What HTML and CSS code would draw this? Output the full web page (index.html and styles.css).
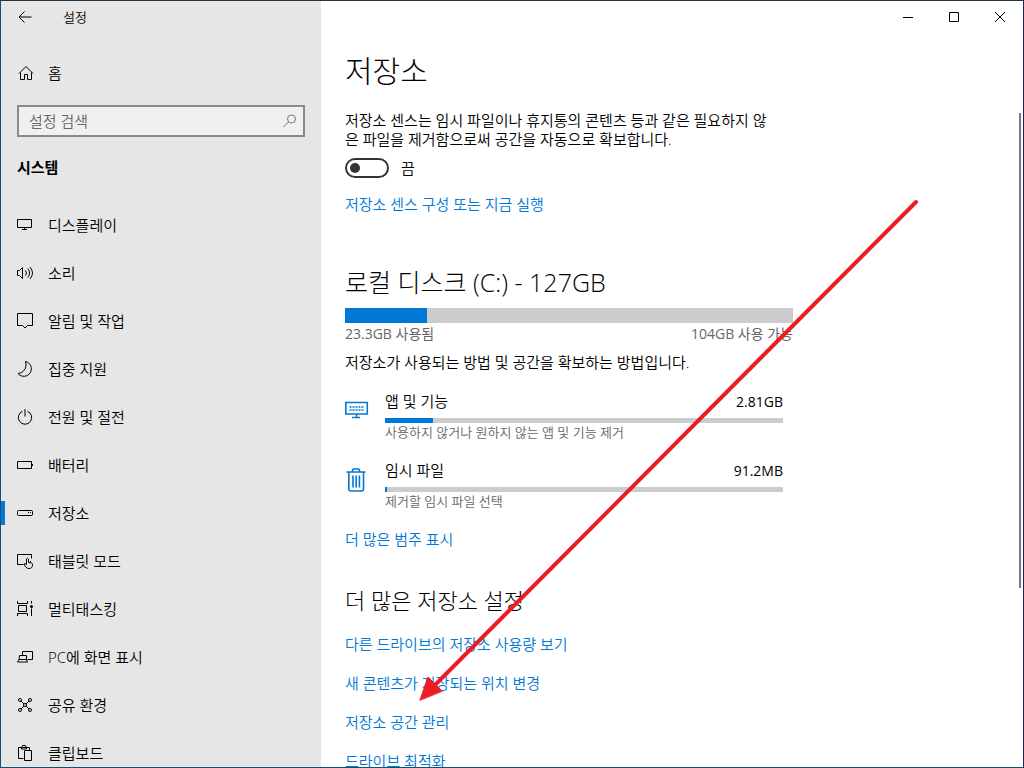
FILE: index.html
```html
<!DOCTYPE html>
<html lang="ko">
<head>
    <meta charset="UTF-8">
    <meta name="viewport" content="width=device-width, initial-scale=1.0">
    <title>설정 - 저장소</title>
    <link rel="stylesheet" href="styles.css">
</head>
<body>
    <div class="window">
        <aside class="sidebar">
            <div class="titlebar">
                <button class="back" aria-label="뒤로">
                    <svg width="18" height="18" viewBox="0 0 18 18"><path d="M8.500 3.500L3 9l5.500 5.500M3 9h12.500"/></svg>
                </button>
                <span>설정</span>
            </div>

            <a class="nav-item home" href="#">
                <svg width="18" height="18" viewBox="0 0 18 18"><path d="M2 9.500L9 2.500l7 7M3.500 8.500v7h4v-5h3v5h4v-7"/></svg>
                홈
            </a>

            <form class="search">
                <input type="text" placeholder="설정 검색" aria-label="설정 검색">
                <svg width="16" height="16" viewBox="0 0 16 16"><circle cx="10.500" cy="6" r="4"/><path d="M7.500 9L2.500 14"/></svg>
            </form>

            <h2 class="group">시스템</h2>

            <nav>
                <a class="nav-item" href="#">
                    <svg width="18" height="18" viewBox="0 0 18 18"><path d="M.5 3.500h14v8h-14zM7.500 12v1M5 13.500h5"/></svg>
                    디스플레이
                </a>
                <a class="nav-item" href="#">
                    <svg width="18" height="18" viewBox="0 0 18 18"><path d="M.5 6.500h2l3-3v11l-3-3h-2zM8.500 6.500q2 2.500 0 5M10.800 4.500q3.600 4.500 0 9M13 3q5 6 0 12"/></svg>
                    소리
                </a>
                <a class="nav-item" href="#">
                    <svg width="18" height="18" viewBox="0 0 18 18"><path d="M.5 1.500h15v12h-5L8 16l-2.500-2.500h-5z"/></svg>
                    알림 및 작업
                </a>
                <a class="nav-item" href="#">
                    <svg width="18" height="18" viewBox="0 0 18 18"><path d="M8.500 1.500A7.500 7.500 0 1 1 1 13.500C6.500 13 10.500 8 8.500 1.500z"/></svg>
                    집중 지원
                </a>
                <a class="nav-item" href="#">
                    <svg width="18" height="18" viewBox="0 0 18 18"><path d="M5.500 3.300A6.700 6.700 0 1 0 10.500 3.300M8 1v7.500"/></svg>
                    전원 및 절전
                </a>
                <a class="nav-item" href="#">
                    <svg width="18" height="18" viewBox="0 0 18 18"><path d="M.5 5.500h14v7h-14zM15.500 8v2"/></svg>
                    배터리
                </a>
                <a class="nav-item active" href="#" aria-current="page">
                    <svg width="18" height="18" viewBox="0 0 18 18"><rect x=".5" y="6.500" width="15" height="5" rx="1"/><path d="M11 8.500h1M13 8.500h1"/></svg>
                    저장소
                </a>
                <a class="nav-item" href="#">
                    <svg width="18" height="18" viewBox="0 0 18 18"><path d="M6.500 12.500h-6v-10h14v4M9.500 12.500V7q1-1.800 2 0v3.500l3 .5q1.200.3 1 1.800c0 2.500-1.200 3.700-3.500 3.700-2.300 0-3.800-1.500-4.800-4.500q.3-1.500 2.300.5M13.500 10.500V9"/></svg>
                    태블릿 모드
                </a>
                <a class="nav-item" href="#">
                    <svg width="18" height="18" viewBox="0 0 18 18"><path d="M.5 1v2.500h10V1M.5 16v-2.500h10V16M1.500 5.500h8v6h-8zM14.500 1v2.500M14.500 8.500V16"/><circle class="dot" cx="14.500" cy="6.500" r="1.500"/></svg>
                    멀티태스킹
                </a>
                <a class="nav-item" href="#">
                    <svg width="18" height="18" viewBox="0 0 18 18"><path d="M5.500 7V3.500h10v8h-5M2.500 7.500h7v4l1 2.500H.5l1.500-2.500zM2 11.500h8"/></svg>
                    PC에 화면 표시
                </a>
                <a class="nav-item" href="#">
                    <svg width="18" height="18" viewBox="0 0 18 18"><circle cx="3" cy="4" r="1.500"/><circle cx="13" cy="4" r="1.500"/><circle cx="3" cy="14" r="1.500"/><circle cx="13" cy="14" r="1.500"/><circle cx="8" cy="9" r="1.500"/><path d="M4 5l3 3M12 5L9 8M4 13l3-3M12 13l-3-3"/></svg>
                    공유 환경
                </a>
                <a class="nav-item" href="#">
                    <svg width="18" height="18" viewBox="0 0 18 18"><path d="M6.500 14.500h-5v-11h11V6M4.500 5V3q1 0 1-1.500h3Q8.500 3 9.500 3v2zM7.500 6.500h7v10h-7z"/></svg>
                    클립보드
                </a>
            </nav>
        </aside>

        <main class="main">
            <div class="window-controls">
                <button aria-label="최소화"><svg width="12" height="12" viewBox="0 0 12 12"><path d="M1 6.500h10"/></svg></button>
                <button aria-label="최대화"><svg width="12" height="12" viewBox="0 0 12 12"><path d="M1.500 1.500h9v9h-9z"/></svg></button>
                <button aria-label="닫기"><svg width="12" height="12" viewBox="0 0 12 12"><path d="M1 1l10 10M11 1L1 11"/></svg></button>
            </div>

            <div class="content">
                <h1>저장소</h1>
                <p class="intro">저장소 센스는 임시 파일이나 휴지통의 콘텐츠 등과 같은 필요하지 않은 파일을 제거함으로써 공간을 자동으로 확보합니다.</p>
                <div class="toggle-row">
                    <input type="checkbox" id="storageSense" class="toggle">
                    <label for="storageSense">끔</label>
                </div>
                <a class="link" href="#">저장소 센스 구성 또는 지금 실행</a>

                <h2 class="drive">로컬 디스크 (C:) - 127GB</h2>
                <div class="bar bar-large"><div class="fill" style="width: 18.3%"></div></div>
                <div class="usage">
                    <span>23.3GB 사용됨</span>
                    <span>104GB 사용 가능</span>
                </div>
                <p class="hint">저장소가 사용되는 방법 및 공간을 확보하는 방법입니다.</p>

                <div class="category">
                    <svg width="24" height="24" viewBox="0 0 24 24">
                        <path class="thick" d="M.8 4.500h21.500V16H.8zM11.500 16v3.500M7 19.500h8"/>
                        <path class="dots" d="M4.500 9h14M4.500 12h14"/>
                    </svg>
                    <div class="category-body">
                        <div class="category-head"><span>앱 및 기능</span><span class="size">2.81GB</span></div>
                        <div class="bar"><div class="fill" style="width: 12%"></div></div>
                        <div class="note">사용하지 않거나 원하지 않는 앱 및 기능 제거</div>
                    </div>
                </div>
                <div class="category">
                    <svg width="24" height="26" viewBox="0 0 24 26">
                        <path class="thick" d="M1.500 5h19M7.500 5V3.500q0-1.500 1.500-1.500h4q1.500 0 1.500 1.500V5M3.800 5v17q0 2 2 2h10.700q2 0 2-2V5"/>
                        <path class="thick" d="M8 8.500v12M11.200 8.500v12M14.400 8.500v12"/>
                    </svg>
                    <div class="category-body">
                        <div class="category-head"><span>임시 파일</span><span class="size">91.2MB</span></div>
                        <div class="bar"><div class="fill" style="width: 0.5%"></div></div>
                        <div class="note">제거할 임시 파일 선택</div>
                    </div>
                </div>
                <a class="link more" href="#">더 많은 범주 표시</a>

                <h2 class="more-title">더 많은 저장소 설정</h2>
                <div class="links">
                    <a class="link" href="#">다른 드라이브의 저장소 사용량 보기</a>
                    <a class="link" href="#">새 콘텐츠가 저장되는 위치 변경</a>
                    <a class="link" href="#">저장소 공간 관리</a>
                    <a class="link" href="#">드라이브 최적화</a>
                </div>
            </div>
            <div class="scroll-thumb"></div>
        </main>

        <!-- arrow pointing at the storage spaces link -->
        <svg class="arrow" width="500" height="502" viewBox="0 0 500 502">
            <path d="M497 3L16 486"/>
            <polygon points="1,501 9,478 23,492"/>
        </svg>
    </div>
</body>
</html>
```

FILE: styles.css
```css
* { box-sizing: border-box; }
body {
    margin: 0;
    font-family: "Open Sans", "Noto Sans CJK KR", sans-serif;
    font-size: 15px;
    font-weight: 350;
    line-height: 20px;
    color: #000;
}
h1, h2, p { margin: 0; }
a { color: inherit; text-decoration: none; }
svg {
    flex: none;
    fill: none;
    stroke: #000;
    stroke-width: 1;
}
button {
    display: flex;
    align-items: center;
    justify-content: center;
    padding: 0;
    border: none;
    background: none;
}
button:hover { background: #dadada; }

.window {
    position: relative;
    display: flex;
    height: 100vh;
    border: 1px solid;
    border-color: #26344a #1b2b58 #15506b #14506e;
    background: #fff;
    overflow: hidden;
}

/* sidebar */
.sidebar {
    flex: 0 0 320px;
    background: #e6e6e6;
    overflow: hidden;
}
.titlebar {
    display: flex;
    align-items: center;
    gap: 14px;
    height: 32px;
    font-size: 13px;
}
.back {
    width: 48px;
    height: 32px;
}
.nav-item {
    position: relative;
    display: flex;
    align-items: center;
    gap: 13px;
    height: 48px;
    padding: 0 16px;
}
.nav-item:hover { background: #dadada; }
.nav-item.active::before {
    content: "";
    position: absolute;
    left: 0;
    top: 12px;
    width: 4px;
    height: 24px;
    background: #0078d7;
}
.home { margin-top: 16px; }
.dot {
    fill: #000;
    stroke: none;
}
.search {
    display: flex;
    align-items: center;
    height: 32px;
    margin: 8px 16px 0;
    padding: 0 6px 0 10px;
    border: 2px solid #8a8a8a;
    background: #f0f0f0;
}
.search input {
    flex: 1;
    min-width: 0;
    padding: 0;
    border: none;
    outline: none;
    background: none;
    font: inherit;
}
.search input::placeholder { color: #666; }
.search svg { stroke: #777; }
.group {
    margin: 20px 16px 24px;
    font-size: 15px;
    font-weight: bold;
}

/* main */
.main {
    position: relative;
    flex: 1;
    min-width: 0;
    overflow: hidden;
}
.window-controls {
    display: flex;
    justify-content: flex-end;
}
.window-controls button {
    width: 46px;
    height: 32px;
}
.content {
    max-width: 496px;
    padding: 18px 24px;
}
h1 {
    font-size: 30px;
    font-weight: 300;
    line-height: 40px;
}
.intro {
    max-width: 432px;
    margin-top: 20px;
    line-height: 19px;
}
.toggle-row {
    display: flex;
    align-items: center;
    gap: 12px;
    margin: 9px 0 16px;
}
.toggle {
    display: flex;
    align-items: center;
    appearance: none;
    width: 44px;
    height: 20px;
    margin: 0;
    padding: 0 3px;
    border: 2px solid #333;
    border-radius: 10px;
}
.toggle::before {
    content: "";
    width: 10px;
    height: 10px;
    border-radius: 50%;
    background: #333;
}
.toggle:checked {
    justify-content: flex-end;
    border-color: #0078d7;
    background: #0078d7;
}
.toggle:checked::before { background: #fff; }
.link {
    display: block;
    width: fit-content;
    color: #0078d7;
}
.link:hover { color: #666; }
.drive {
    margin: 51px 0 9px;
    font-size: 25px;
    font-weight: 300;
    line-height: 34px;
}
.bar {
    height: 5px;
    background: #ccc;
}
.bar-large { height: 15px; }
.fill {
    height: 100%;
    background: #0078d7;
}
.usage {
    display: flex;
    justify-content: space-between;
    font-size: 14px;
    font-weight: 400;
    line-height: 22px;
    color: #666;
}
.hint { margin-top: 7px; }
.category {
    display: flex;
    gap: 16px;
    margin: 20px 10px 0 0;
}
.category > svg {
    margin-top: 6px;
    stroke: #0078d7;
}
.thick { stroke-width: 1.6; }
.dots { stroke-width: 1.6; stroke-dasharray: 2 1; }
.category-body { flex: 1; }
.category-head {
    display: flex;
    align-items: baseline;
    justify-content: space-between;
    margin-bottom: 7px;
    line-height: 18px;
}
.size {
    font-size: 14px;
    font-weight: 400;
}
.note {
    font-size: 13px;
    line-height: 18px;
    color: #666;
}
.more { margin-top: 19px; }
.more-title {
    margin: 36px 0 19px;
    font-size: 22px;
    font-weight: 300;
    line-height: 30px;
}
.links {
    display: flex;
    flex-direction: column;
    gap: 19px;
}
.scroll-thumb {
    position: absolute;
    top: 112px;
    right: 2px;
    width: 2px;
    height: 62%;
    background: #7a7a7a;
}

.arrow {
    position: absolute;
    left: 418px;
    top: 198px;
    stroke: #ed1c24;
    stroke-width: 4;
    stroke-linecap: round;
    pointer-events: none;
}
.arrow polygon { fill: #ed1c24; stroke-width: 1; }
```
